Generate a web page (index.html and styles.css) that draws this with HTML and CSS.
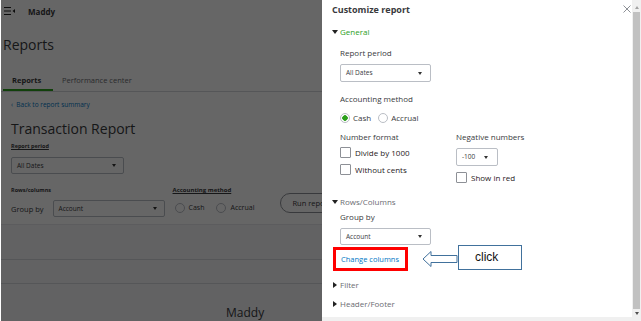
FILE: index.html
```html
<!DOCTYPE html>
<html lang="en">
<head>
<meta charset="UTF-8">
<title>Customize report</title>
<link rel="stylesheet" href="styles.css">
</head>
<body>
<div class="screen">
    <div class="page">
        <div class="topbar">
            <svg class="burger" width="11" height="8" viewBox="0 0 11 8"><path d="M0 0.5h7M0 4h7M0 7.5h7" stroke="#222" stroke-width="1"/><path d="M11 2l-2.5 2 2.5 2z" fill="#222"/></svg>
            <span class="company">Maddy</span>
        </div>
        <h1 class="page-title">Reports</h1>
        <div class="tabs">
            <span class="tab active">Reports</span>
            <span class="tab">Performance center</span>
        </div>
        <div class="report-head">
            <a class="back">&lsaquo;&nbsp; Back to report summary</a>
            <h2 class="report-title">Transaction Report</h2>
            <div class="tiny-label">Report period</div>
            <div class="select wide"><span>All Dates</span><i class="caret"></i></div>
        </div>
        <div class="filters">
            <div class="filter-col">
                <div class="tiny-label plain">Rows/columns</div>
                <div class="group-row">
                    <span class="group-text">Group by</span>
                    <div class="select wide"><span>Account</span><i class="caret"></i></div>
                </div>
            </div>
            <div class="filter-col acc">
                <div class="tiny-label">Accounting method</div>
                <div class="radios small">
                    <span class="radio"></span><span>Cash</span>
                    <span class="radio"></span><span>Accrual</span>
                </div>
            </div>
            <div class="divider"></div>
            <button class="run">Run report</button>
        </div>
        <div class="report-body">
            <div class="band first"></div>
            <div class="band"></div>
            <div class="report-company">Maddy</div>
        </div>
        <div class="shade"></div>
    </div>

    <div class="panel">
        <div class="panel-inner">
            <div class="panel-title">Customize report</div>
            <svg class="close" width="8" height="8" viewBox="0 0 8 8"><path d="M0.5 0.5L7.5 7.5M7.5 0.5L0.5 7.5" stroke="#8d9096" stroke-width="1"/></svg>

            <div class="section open green">General</div>
            <div class="sub">
                <div class="label lbl-period">Report period</div>
                <div class="select mid"><span>All Dates</span><i class="caret"></i></div>
                <div class="label lbl-acc">Accounting method</div>
                <div class="radios">
                    <span class="radio on"></span><span>Cash</span>
                    <span class="radio"></span><span>Accrual</span>
                </div>
                <div class="format">
                    <div class="fcol">
                        <div class="label">Number format</div>
                        <label class="check first"><span class="box"></span>Divide by 1000</label>
                        <label class="check"><span class="box"></span>Without cents</label>
                    </div>
                    <div class="fcol">
                        <div class="label">Negative numbers</div>
                        <div class="select neg"><span>-100</span><i class="caret"></i></div>
                        <label class="check"><span class="box"></span>Show in red</label>
                    </div>
                </div>
            </div>

            <div class="section open rows">Rows/Columns</div>
            <div class="sub">
                <div class="label lbl-group">Group by</div>
                <div class="select mid short"><span>Account</span><i class="caret"></i></div>
            </div>
            <div class="hint-row">
                <a class="change">Change columns</a>
                <svg class="arrow" width="36" height="18" viewBox="0 0 36 18"><path d="M1 9L9 1.5V5.5H35V12.5H9V16.5Z" fill="#fff" stroke="#41719c" stroke-width="1"/></svg>
                <div class="callout">click</div>
            </div>

            <div class="section closed filter">Filter</div>
            <div class="section closed hf">Header/Footer</div>
        </div>
        <div class="scrollbar">
            <i class="sb-up"></i>
            <div class="thumb"></div>
            <i class="sb-down"></i>
        </div>
    </div>
</div>
</body>
</html>
```

FILE: styles.css
```css
* {box-sizing: border-box;}
html, body {margin: 0; padding: 0;}
body {width: 641px; height: 321px; overflow: hidden; font-family: "Open Sans", "Noto Sans", sans-serif; color: #393a3d; background: #fff;}
.screen {display: flex; height: 321px;}

/* left page behind the overlay */
.page {position: relative; width: 322px; flex: none; background: #f4f5f8; overflow: hidden; border-left: 1px solid #fff;}
.topbar {display: flex; align-items: center; height: 22px; padding-left: 3px; background: #fff;}
.burger {margin-right: 13px;}
.company {font-size: 8px; font-weight: 700;}
.page-title {margin: 0; padding: 14px 0 0 2px; height: 53px; font-size: 14px; font-weight: 400; line-height: 18px; background: #fff;}
.tabs {display: flex; height: 17px; border-bottom: 1px solid #d4d7dc; background: #fff; padding-left: 2px;}
.tab {font-size: 7.5px; line-height: 10px; padding: 0 9px; color: #6b6c72;}
.tab.active {color: #393a3d; font-weight: 700; border-bottom: 2px solid #2ca01c; width: 50px;}
.report-head {background: #fff; padding: 9px 0 0 10px;}
.back {display: block; font-size: 6.5px; line-height: 8px; color: #0077c5;}
.report-title {margin: 11px 0 0; font-size: 14px; font-weight: 400; line-height: 18px;}
.tiny-label {font-size: 5.5px; font-weight: 700; line-height: 8px; margin-top: 4px; text-decoration: underline; color: #393a3d; white-space: nowrap;}
.tiny-label.plain {text-decoration: none; margin-top: 0;}
.select {display: flex; align-items: center; justify-content: space-between; border: 1px solid #babec5; border-radius: 2px; background: #fff; font-size: 6.5px; color: #393a3d; padding: 0 7px 0 5px;}
.select.wide {width: 113px; height: 17px; margin-top: 7px;}
.caret {width: 0; height: 0; border-left: 2.5px solid transparent; border-right: 2.5px solid transparent; border-top: 3px solid #333;}
.filters {display: flex; align-items: flex-start; background: #fff; height: 51px; padding: 12px 0 0 10px; border-bottom: 1px solid #e6e7ea;}
.group-row {display: flex; align-items: center; gap: 9px; margin-top: 6px;}
.group-row .select {margin-top: 0; width: 112px;}
.group-text {font-size: 7.5px; white-space: nowrap;}
.filter-col.acc {margin-left: 8px;}
.filter-col.acc .tiny-label {margin-top: 0; font-size: 6px;}
.radios {display: flex; align-items: center; gap: 4px; font-size: 8px; line-height: 12px;}
.radios.small {font-size: 7px; margin-top: 8px; white-space: nowrap;}
.radio {width: 10px; height: 10px; border-radius: 50%; border: 1px solid #babec5; background: #fff; flex: none;}
.radios span + .radio {margin-left: 6px;}
.radios.small .radio {margin-left: 2px;}
.radios.small span + .radio {margin-left: 8px;}
.divider {width: 1px; height: 34px; background: #d4d7dc; margin: -1px 14px 0 12px;}
.run {height: 20px; padding: 0 11px; border: 1px solid #8d9096; border-radius: 10px; background: #fff; font-family: inherit; font-size: 7.5px; color: #393a3d; margin-top: 7px; white-space: nowrap;}
.report-body {position: relative;}
.band {height: 24px; border-bottom: 1px solid #d4d7dc;}
.band.first {height: 35px;}
.report-company {padding: 22px 0 0 225px; font-size: 12px; line-height: 13px;}
.shade {position: absolute; inset: 0; background: rgba(0, 0, 0, 0.6);}

/* customize panel */
.panel {flex: 1; display: flex; background: #fff; border-bottom: 4px solid #f0f0f0;}
.panel-inner {flex: 1; position: relative; padding: 4px 0 0 10px; font-size: 8px; line-height: 12px;}
.panel-title {font-size: 9px; font-weight: 700; color: #393a3d;}
.close {position: absolute; top: 5px; right: 1px;}
.section {position: relative; padding-left: 8px; line-height: 12px; color: #6b6c72;}
.section::before {content: ""; position: absolute; left: 0; width: 0; height: 0;}
.section.open::before {border-left: 3px solid transparent; border-right: 3px solid transparent; border-top: 4px solid #222; top: 4px;}
.section.closed::before {border-top: 3px solid transparent; border-bottom: 3px solid transparent; border-left: 4px solid #222; top: 3px; left: 1px;}
.section.green {color: #2ca01c; margin-top: 10px;}
.sub {padding-left: 8px;}
.label {color: #393a3d;}
.lbl-period {margin-top: 9px;}
.select.mid {width: 91px; height: 18px; margin-top: 5px; padding: 0 8px 0 5px;}
.select.short {height: 17px;}
.lbl-acc {margin-top: 11px;}
.panel .radios {margin-top: 7px; gap: 3px;}
.panel .radios span + .radio {margin-left: 4px;}
.radio.on {background: radial-gradient(circle, #2ca01c 0 2.5px, #fff 3px);}
.format {display: flex; margin-top: 7px;}
.fcol {width: 116px;}
.check {display: flex; align-items: center; gap: 4px; margin-top: 6px; line-height: 11px; height: 11px; color: #1f2023;}
.check.first {margin-top: 4px;}
.box {width: 11px; height: 11px; border: 1px solid #8d9096; border-radius: 1px; background: #fff; flex: none;}
.select.neg {width: 42px; height: 18px; margin-top: 5px; padding: 0 9px 0 5px;}
.section.rows {margin-top: 13px;}
.lbl-group {margin-top: 3px;}
.hint-row {display: flex; align-items: flex-start; margin: 0 0 0 1px; height: 26px;}
.change {display: block; width: 75px; height: 24px; border: 3px solid #ff0000; color: #0077c5; font-size: 7.5px; line-height: 18px; padding-left: 5px; margin-top: 2px; white-space: nowrap;}
.arrow {margin: 5px 0 0 14px;}
.callout {width: 64px; height: 25px; border: 1px solid #41719c; font-size: 12px; line-height: 23px; padding-left: 16px; color: #111; font-family: "Liberation Sans", Arial, sans-serif;}
.section.filter {margin-top: 8px;}
.section.hf {margin-top: 7px;}

.scrollbar {width: 9px; background: #f0f0f0; display: flex; flex-direction: column; align-items: center; padding: 6px 0 2px;}
.thumb {flex: 1; width: 7px; background: #c1c1c1; margin: 3px 0;}
.sb-up, .sb-down {width: 0; height: 0; border-left: 2.5px solid transparent; border-right: 2.5px solid transparent;}
.sb-up {border-bottom: 3px solid #a3a3a3;}
.sb-down {border-top: 3px solid #505050;}
```
